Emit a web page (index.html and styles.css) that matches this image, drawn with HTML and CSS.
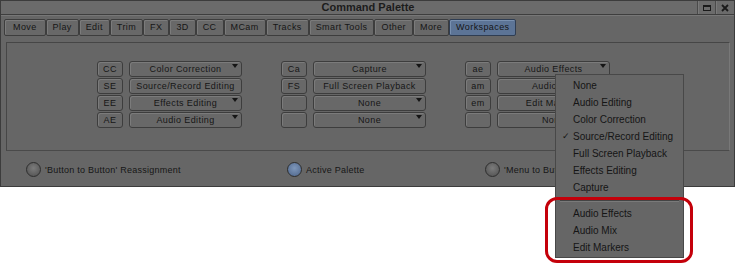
FILE: index.html
```html
<!DOCTYPE html>
<html lang="en">
<head>
    <meta charset="UTF-8">
    <title>Command Palette</title>
    <link rel="stylesheet" href="styles.css">
</head>
<body>
    <div class="window">
        <div class="titlebar">
            <span class="title">Command Palette</span>
            <div class="win-controls">
                <span class="ctl"><span class="min-box"></span></span>
                <span class="ctl">
                    <svg width="8" height="8" viewBox="0 0 8 8"><path d="M1 1 L7 7 M7 1 L1 7" stroke="#1a1a1a" stroke-width="1.8"/></svg>
                </span>
            </div>
        </div>

        <div class="tabs">
            <span class="tab">Move</span>
            <span class="tab">Play</span>
            <span class="tab">Edit</span>
            <span class="tab">Trim</span>
            <span class="tab">FX</span>
            <span class="tab">3D</span>
            <span class="tab">CC</span>
            <span class="tab">MCam</span>
            <span class="tab">Tracks</span>
            <span class="tab">Smart Tools</span>
            <span class="tab">Other</span>
            <span class="tab">More</span>
            <span class="tab active">Workspaces</span>
        </div>

        <div class="panel">
            <div class="group">
                <span class="key">CC</span><span class="wide drop">Color Correction</span>
                <span class="key">SE</span><span class="wide">Source/Record Editing</span>
                <span class="key">EE</span><span class="wide drop">Effects Editing</span>
                <span class="key">AE</span><span class="wide drop">Audio Editing</span>
            </div>
            <div class="group">
                <span class="key">Ca</span><span class="wide drop">Capture</span>
                <span class="key">FS</span><span class="wide">Full Screen Playback</span>
                <span class="key"></span><span class="wide drop">None</span>
                <span class="key"></span><span class="wide drop">None</span>
            </div>
            <div class="group">
                <span class="key">ae</span><span class="wide drop">Audio Effects</span>
                <span class="key">am</span><span class="wide drop">Audio Mix</span>
                <span class="key">em</span><span class="wide drop">Edit Markers</span>
                <span class="key"></span><span class="wide drop">None</span>
            </div>
        </div>

        <div class="radios">
            <label class="radio"><span class="dot"></span>'Button to Button' Reassignment</label>
            <label class="radio"><span class="dot on"></span>Active Palette</label>
            <label class="radio"><span class="dot"></span>'Menu to Button' Reassignment</label>
        </div>
    </div>

    <!-- open dropdown for the "ae" workspace -->
    <div class="menu">
        <div class="item">None</div>
        <div class="item">Audio Editing</div>
        <div class="item">Color Correction</div>
        <div class="item checked">Source/Record Editing</div>
        <div class="item">Full Screen Playback</div>
        <div class="item">Effects Editing</div>
        <div class="item">Capture</div>
        <div class="sep"></div>
        <div class="item">Audio Effects</div>
        <div class="item">Audio Mix</div>
        <div class="item">Edit Markers</div>
    </div>
    <div class="callout"></div>
</body>
</html>
```

FILE: styles.css
```css
body {
    margin: 0;
    background-color: #fff;
    font-family: "Liberation Sans", Arial, sans-serif;
    color: #161616;
    position: relative;
    width: 735px;
    height: 265px;
    overflow: hidden;
}
.window {
    width: 735px;
    height: 187px;
    box-sizing: border-box;
    background-color: #666;
    border: 1px solid #3c3c3c;
}
.titlebar {
    display: flex;
    height: 13px;
    padding-left: 38px;
    background-color: #6b6b6b;
    border-bottom: 1px solid #3e3e3e;
    box-shadow: 0 1px 0 #777;
}
.title {
    flex: 1;
    text-align: center;
    font-size: 11px;
    font-weight: bold;
    line-height: 13px;
    color: #1c1c1c;
}
.win-controls {
    display: flex;
    width: 37px;
}
.ctl {
    display: flex;
    align-items: center;
    justify-content: center;
    width: 17px;
    border-left: 1px solid #4a4a4a;
    box-shadow: inset 1px 0 0 #7a7a7a;
}
.min-box {
    width: 6px;
    height: 3px;
    border: 1px solid #1a1a1a;
    border-top-width: 2px;
}
.tabs {
    display: flex;
    padding: 4px 0 0 3px;
}
.tab {
    height: 15px;
    line-height: 15px;
    padding: 0 6px;
    font-size: 9px;
    letter-spacing: 0.4px;
    background-color: #686868;
    border: 1px solid #3d3d3d;
    border-radius: 2px;
    box-shadow: inset 1px 1px 0 #7b7b7b;
}
.tab:first-child {
    padding: 0 8px;
}
.tab.active {
    background-color: #5c7496;
    border-color: #2f3d52;
    box-shadow: inset 1px 1px 0 #7890b0;
}
.panel {
    display: flex;
    gap: 39px;
    margin: 6px 4px 0 5px;
    padding: 18px 0 0 90px;
    box-sizing: border-box;
    height: 109px;
    border: 1px solid #464646;
    border-right-color: #787878;
    border-bottom-color: #4a4a4a;
}
.group {
    display: grid;
    grid-template-columns: 26px 113px;
    grid-auto-rows: 16px;
    column-gap: 6px;
    row-gap: 1px;
}
.key, .wide {
    position: relative;
    box-sizing: border-box;
    font-size: 9px;
    letter-spacing: 0.4px;
    line-height: 14px;
    text-align: center;
    white-space: nowrap;
    overflow: hidden;
    background-color: #686868;
    border: 1px solid #3d3d3d;
    border-radius: 3px;
    box-shadow: inset 1px 1px 0 #7b7b7b;
}
.drop::after {
    content: "";
    position: absolute;
    top: 2px;
    right: 3px;
    border-left: 3px solid transparent;
    border-right: 3px solid transparent;
    border-top: 4px solid #151515;
}
.radios {
    display: grid;
    grid-template-columns: 261px 198px auto;
    margin-top: 11px;
    padding-left: 25px;
}
.radio {
    display: flex;
    align-items: center;
    gap: 4px;
    font-size: 9px;
    letter-spacing: 0.25px;
    white-space: nowrap;
}
.dot {
    width: 13px;
    height: 13px;
    border-radius: 50%;
    border: 1px solid #2e2e2e;
    background: radial-gradient(circle at 50% 40%, #7c7c7c, #5c5c5c 70%, #4e4e4e);
}
.dot.on {
    background: radial-gradient(circle at 50% 40%, #7e97ba, #5b7398 70%, #4a5f80);
}
.menu {
    position: absolute;
    left: 555px;
    top: 74px;
    width: 129px;
    height: 184px;
    box-sizing: border-box;
    padding-top: 2px;
    background-color: #666;
    border: 1px solid #484848;
}
.item {
    position: relative;
    height: 17px;
    line-height: 17px;
    padding-left: 17px;
    font-size: 10px;
    color: #151515;
}
.item.checked::before {
    content: "\2713";
    position: absolute;
    left: 6px;
    font-size: 9px;
}
.sep {
    height: 4px;
    margin: 0 4px 4px 4px;
    border-bottom: 1px solid #444;
    box-shadow: 0 1px 0 #7a7a7a;
}
.callout {
    position: absolute;
    left: 545px;
    top: 197px;
    width: 148px;
    height: 66px;
    box-sizing: border-box;
    border: 3px solid #c4000a;
    border-radius: 12px;
}
```
